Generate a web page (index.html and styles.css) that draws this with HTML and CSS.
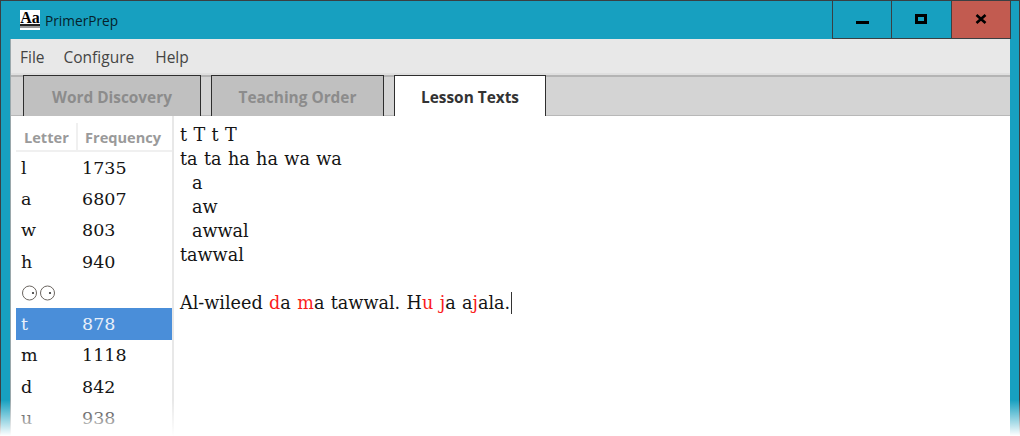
FILE: index.html
```html
<!DOCTYPE html>
<html>
<head>
	<title>PrimerPrep</title>
	<link rel="stylesheet" href="styles.css">
</head>
<body>
	<div class="window">
		<div class="titlebar">
			<svg class="appicon" width="20" height="20" viewBox="0 0 20 20">
				<rect width="20" height="20" fill="#fff"/>
				<text class="appicon-text" x="0.2" y="13">Aa</text>
				<rect x="0" y="14" width="20" height="2" fill="#222"/>
				<rect x="0" y="16" width="20" height="2" fill="#999"/>
			</svg>
			<span class="apptitle">PrimerPrep</span>
			<div class="winbtns">
				<div class="winbtn">
					<svg width="14" height="14" viewBox="0 0 14 14"><rect x="1" y="9" width="13" height="3" fill="#000"/></svg>
				</div>
				<div class="winbtn">
					<svg width="14" height="14" viewBox="0 0 14 14"><rect x="2.5" y="3.5" width="9" height="7" fill="none" stroke="#000" stroke-width="3"/></svg>
				</div>
				<div class="winbtn close">
					<svg width="14" height="14" viewBox="0 0 14 14"><path d="M2.5 3 L11.5 11 M11.5 3 L2.5 11" stroke="#000" stroke-width="2.6" fill="none"/></svg>
				</div>
			</div>
		</div>

		<div class="client">
			<div class="menubar">
				<span class="menu-item menu-file">File</span>
				<span class="menu-item">Configure</span>
				<span class="menu-item">Help</span>
			</div>

			<div class="tabbar">
				<div class="tab tab1">Word Discovery</div>
				<div class="tab tab2">Teaching Order</div>
				<div class="tab tab3 active">Lesson Texts</div>
			</div>

			<div class="main">
				<div class="lettertable">
					<div class="thead">
						<div class="th col-letter">Letter</div>
						<div class="th col-freq">Frequency</div>
					</div>
					<div class="row"><span class="col-letter">l</span><span class="col-freq">1735</span></div>
					<div class="row"><span class="col-letter">a</span><span class="col-freq">6807</span></div>
					<div class="row"><span class="col-letter">w</span><span class="col-freq">803</span></div>
					<div class="row"><span class="col-letter">h</span><span class="col-freq">940</span></div>
					<div class="row">
						<span class="col-letter">
							<svg class="glyph" width="42" height="18" viewBox="0 0 42 18">
								<circle cx="13.5" cy="9" r="7" fill="none" stroke="#6b6560" stroke-width="1"/>
								<circle cx="17" cy="9" r="1.1" fill="#333"/>
								<circle cx="31.5" cy="9" r="7" fill="none" stroke="#6b6560" stroke-width="1"/>
								<circle cx="34" cy="9" r="1.1" fill="#333"/>
							</svg>
						</span>
						<span class="col-freq"></span>
					</div>
					<div class="row selected"><span class="col-letter">t</span><span class="col-freq">878</span></div>
					<div class="row"><span class="col-letter">m</span><span class="col-freq">1118</span></div>
					<div class="row"><span class="col-letter">d</span><span class="col-freq">842</span></div>
					<div class="row"><span class="col-letter">u</span><span class="col-freq">938</span></div>
				</div>

				<div class="editor">
					<div class="line">t T t T</div>
					<div class="line">ta ta ha ha wa wa</div>
					<div class="line indent">a</div>
					<div class="line indent">aw</div>
					<div class="line indent">awwal</div>
					<div class="line">tawwal</div>
					<div class="line">&nbsp;</div>
					<div class="line">Al-wileed <span class="red">d</span>a <span class="red">m</span>a tawwal. H<span class="red">u</span> <span class="red">j</span>a a<span class="red">j</span>ala.<span class="caret"></span></div>
				</div>
			</div>
		</div>
	</div>
	<div class="fade"></div>
</body>
</html>
```

FILE: styles.css
```css
* {
	box-sizing: border-box;
}

html, body {
	margin: 0;
	height: 100%;
	overflow: hidden;
}

body {
	position: relative;
	background: #fff;
	font-family: "Open Sans", "Noto Sans", sans-serif;
}

.window {
	height: 436px;
	background: #17a0c0;
	border-top: 1px solid #3a3f42;
	border-left: 1px solid #3a3f42;
	border-right: 1px solid #3a3f42;
	padding: 0 9px 0 9px;
	display: flex;
	flex-direction: column;
}

.titlebar {
	height: 38px;
	flex: none;
	display: flex;
	align-items: center;
	padding-left: 10px;
	margin-right: -1px;
}

.appicon {
	flex: none;
	margin-top: -1px;
}

.appicon-text {
	font-family: "Liberation Serif", serif;
	font-size: 16px;
	font-weight: bold;
	fill: #000;
}

.apptitle {
	margin-left: 5px;
	font-size: 13.7px;
	color: #06222b;
}

.winbtns {
	margin-left: auto;
	height: 38px;
	margin-top: -1px;
	display: flex;
	border-left: 1px solid #3a3f42;
	border-bottom: 1px solid #3a3f42;
}

.winbtn {
	width: 59.5px;
	border-right: 1px solid #3a3f42;
	display: flex;
	align-items: center;
	justify-content: center;
}

.winbtn.close {
	background: #c25b50;
}

.client {
	flex: 1;
	min-height: 0;
	display: flex;
	flex-direction: column;
	background: #fff;
	border-left: 1px solid #9aa7ab;
}

.menubar {
	height: 36px;
	flex: none;
	background: #e8e8e8;
	border-bottom: 2px solid #dfdfdf;
	display: flex;
	align-items: center;
	padding: 2px 0 0 9px;
	gap: 21px;
	font-size: 15.5px;
	color: #444;
}

.menu-file {
	margin-right: -2px;
}

.tabbar {
	height: 41px;
	flex: none;
	display: flex;
	gap: 10px;
	padding-left: 12px;
	background: #d4d4d4;
	border-top: 2px solid #b4b4b4;
	border-bottom: 1px solid #b8b8b8;
}

.tab {
	height: 41px;
	margin-top: -2px;
	padding-top: 2px;
	background: #c0c0c0;
	border: 1px solid #2e2e2e;
	border-bottom: none;
	display: flex;
	align-items: center;
	justify-content: center;
	font-size: 15.4px;
	font-weight: bold;
	color: #8c8c8c;
}

.tab1 {
	width: 178px;
}

.tab2 {
	width: 173px;
}

.tab3 {
	width: 152px;
}

.tab.active {
	background: #fff;
	color: #333;
	position: relative;
}

.main {
	flex: 1;
	min-height: 0;
	display: flex;
	overflow: hidden;
}

.lettertable {
	width: 158px;
	flex: none;
	margin-left: 5px;
	padding-top: 7px;
	border-right: 2px solid #e8e8e8;
}

.thead {
	height: 29px;
	display: flex;
	align-items: center;
	border-bottom: 2px solid #f0f0f0;
	font-size: 14.6px;
	font-weight: bold;
	color: #9a9a9a;
}

.th.col-letter {
	height: 100%;
	display: flex;
	align-items: center;
	padding-left: 8px;
	border-right: 2px solid #f0f0f0;
}

.th.col-freq {
	padding-left: 7px;
	white-space: nowrap;
}

.col-letter {
	width: 62px;
	flex: none;
}

.col-freq {
	flex: 1;
}

.row {
	height: 31.3px;
	display: flex;
	align-items: center;
	padding-left: 5px;
	font-family: "DejaVu Serif", serif;
	font-size: 17.5px;
	color: #141414;
}

.row .col-letter {
	width: 61px;
}

.row.selected {
	background: #4a8ed9;
	color: #e8f0fa;
}

.glyph {
	display: block;
	margin-left: -5px;
}

.editor {
	flex: 1;
	padding: 7px 0 0 6px;
	font-family: "DejaVu Serif", serif;
	font-size: 17.6px;
	word-spacing: 0.8px;
	color: #141414;
}

.line {
	height: 24px;
	line-height: 24px;
	white-space: nowrap;
}

.line.indent {
	padding-left: 12px;
}

.red {
	color: #fa1c1c;
}

.caret {
	display: inline-block;
	width: 1px;
	height: 22px;
	margin-left: 1px;
	background: #333;
	vertical-align: -5px;
}

.fade {
	position: absolute;
	left: 0;
	right: 0;
	bottom: 0;
	height: 36px;
	background: linear-gradient(to bottom, rgba(255, 255, 255, 0), #fff);
}
```
